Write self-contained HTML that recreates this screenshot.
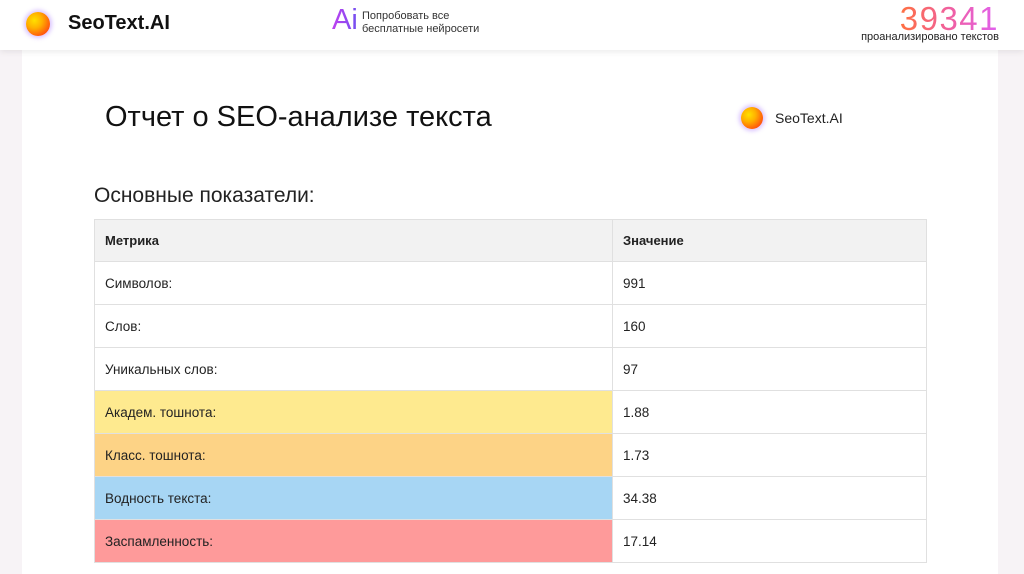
<!DOCTYPE html>
<html><head><meta charset="utf-8"><style>
*{margin:0;padding:0;box-sizing:border-box}
body{width:1024px;height:574px;overflow:hidden;background:#f7f3f6;font-family:"Liberation Sans","DejaVu Sans",sans-serif;color:#222;position:relative}
.hdr{position:absolute;left:0;top:0;width:1024px;height:50px;background:#fff;box-shadow:0 2px 6px rgba(0,0,0,.08);z-index:2}
.ball{position:absolute;border-radius:50%;background:radial-gradient(circle at 35% 35%,#ffe000 0%,#ffb000 35%,#ff4a10 80%,#f03020 100%);box-shadow:0 0 4px 2px rgba(170,120,255,.45)}
.card{position:absolute;left:22px;top:50px;width:976px;height:524px;background:#fff}
table{position:absolute;left:94px;top:219px;width:833px;border-collapse:collapse;font-size:13.5px}
td,th{border:1px solid #e0e0e0;height:43px;padding:0 10px;text-align:left}
th{background:#f2f2f2;font-weight:bold;height:42px;font-size:13px}
td:first-child,th:first-child{width:518px}
</style></head><body>
<div class="hdr">
 <div class="ball" style="left:26px;top:12px;width:24px;height:24px"></div>
 <div style="position:absolute;left:68px;top:12px;font-size:20px;font-weight:bold;color:#111">SeoText.AI</div>
 <div style="position:absolute;left:332px;top:4px;font-size:29px;background:linear-gradient(90deg,#c040f0,#7050f0);-webkit-background-clip:text;color:transparent">Ai</div>
 <div style="position:absolute;left:362px;top:10px;font-size:11px;line-height:13px;color:#333">Попробовать все<br>бесплатные нейросети</div>
 <div style="position:absolute;right:25px;top:0px;font-size:33px;line-height:38px;letter-spacing:1.5px;background:linear-gradient(90deg,#ff7040,#f060a0,#e060f0);-webkit-background-clip:text;color:transparent">39341</div>
 <div style="position:absolute;right:25px;top:31px;font-size:11px;color:#222">проанализировано текстов</div>
</div>
<div class="card"></div>
<div style="position:absolute;left:105px;top:101px;font-size:29px;color:#111">Отчет о SEO-анализе текста</div>
<div class="ball" style="left:741px;top:107px;width:22px;height:22px"></div>
<div style="position:absolute;left:775px;top:110px;font-size:14px;color:#222">SeoText.AI</div>
<div style="position:absolute;left:94px;top:184px;font-size:21px;color:#222">Основные показатели:</div>
<table>
<tr><th>Метрика</th><th>Значение</th></tr>
<tr><td>Символов:</td><td>991</td></tr>
<tr><td>Слов:</td><td>160</td></tr>
<tr><td>Уникальных слов:</td><td>97</td></tr>
<tr><td style="background:#feea8f">Академ. тошнота:</td><td>1.88</td></tr>
<tr><td style="background:#fdd386">Класс. тошнота:</td><td>1.73</td></tr>
<tr><td style="background:#a7d6f4">Водность текста:</td><td>34.38</td></tr>
<tr><td style="background:#fe9a9a">Заспамленность:</td><td>17.14</td></tr>
</table>
</body></html>
